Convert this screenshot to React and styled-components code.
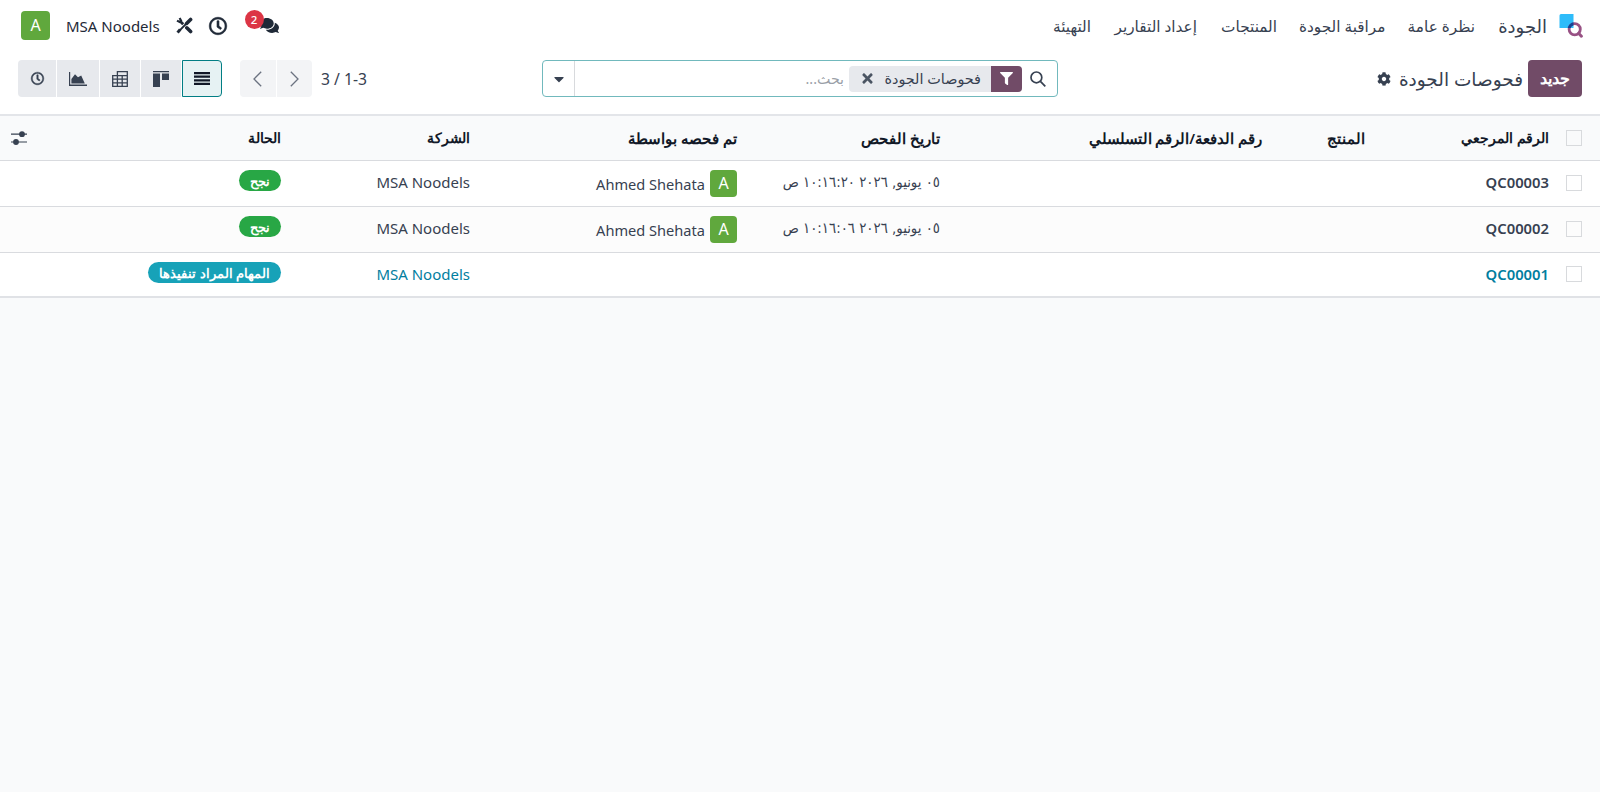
import React from "react";
import styled, { createGlobalStyle } from "styled-components";
import { FaRegClock, FaComments, FaFilter, FaCog, FaCaretDown, FaTimes } from "react-icons/fa";

const menu = [
  { label: "نظرة عامة", width: 64.5 },
  { label: "مراقبة الجودة", width: 83.5 },
  { label: "المنتجات", width: 55 },
  { label: "إعداد التقارير", width: 81 },
  { label: "التهيئة", width: 40 },
];

const columns = [
  { label: "الرقم المرجعي", size: 14.3 },
  { label: "المنتج", size: 14.5 },
  { label: "رقم الدفعة/الرقم التسلسلي", size: 14.6 },
  { label: "تاريخ الفحص", size: 15.3 },
  { label: "تم فحصه بواسطة", size: 15.2 },
  { label: "الشركة", size: 13.8 },
  { label: "الحالة", size: 14 },
];

const checks = [
  {
    ref: "QC00003",
    date: "٠٥ يونيو, ٢٠٢٦ ١٠:١٦:٢٠ ص",
    user: "Ahmed Shehata",
    company: "MSA Noodels",
    state: "نجح",
  },
  {
    ref: "QC00002",
    date: "٠٥ يونيو, ٢٠٢٦ ١٠:١٦:٠٦ ص",
    user: "Ahmed Shehata",
    company: "MSA Noodels",
    state: "نجح",
  },
  {
    ref: "QC00001",
    company: "MSA Noodels",
    state: "المهام المراد تنفيذها",
    todo: true,
  },
];

function Logo() {
  return (
    <svg width="24" height="24" viewBox="0 0 24 24">
      <clipPath id="sheet">
        <path d="M2 0H14.5v14H.5V1.5A1.5 1.5 0 0 1 2 0Z" />
      </clipPath>
      <path d="M2 0H14.5v14H.5V1.5A1.5 1.5 0 0 1 2 0Z" fill="#2ebcfa" />
      <circle cx="15.7" cy="15.3" r="5.6" fill="none" stroke="#985184" strokeWidth="2.8" />
      <circle cx="15.7" cy="15.3" r="5.6" fill="none" stroke="#144496" strokeWidth="2.8" clipPath="url(#sheet)" />
      <path d="M19.8 19.4l2.6 2.8" stroke="#985184" strokeWidth="3" strokeLinecap="round" />
    </svg>
  );
}

function ToolsIcon() {
  return (
    <svg width="17" height="17" viewBox="0 0 17 17" fill="none" stroke="#1f2937">
      <path d="M14.6 2.4L10.6 6.4" strokeWidth="3.6" strokeLinecap="round" />
      <path d="M10 7L3.2 13.8" strokeWidth="1.8" />
      <path d="M4.2 12.4L1.6 15.6" strokeWidth="3" />
      <path d="M1 3.6L3.6 5L5 3.6L3.6 1" strokeWidth="2.2" />
      <path d="M4.2 4.2L7.2 7.2" strokeWidth="2.8" />
      <path d="M10.8 10.8L14.6 14.6" strokeWidth="3.6" strokeLinecap="round" />
    </svg>
  );
}

function AreaIcon() {
  return (
    <svg width="18" height="14" viewBox="0 0 18 14" fill="#374151">
      <path d="M0 0h1.2v12.6H18V14H0z" />
      <path d="M2.4 11.5V7L6 2.2l3 3L12.2 3.4 15.8 11.5z" />
    </svg>
  );
}

function PivotIcon() {
  return (
    <svg width="16" height="16" viewBox="0 0 16 16" fill="none" stroke="#374151" strokeWidth="1.3">
      <path d="M5.4 4.6V.7h9.9v14.6H.7V4.6h14.6M.7 8.2h14.6M.7 11.8h14.6M5.4 4.6v10.7M10.2 4.6v10.7" />
    </svg>
  );
}

function KanbanIcon() {
  return (
    <svg width="16" height="16" viewBox="0 0 16 16" fill="#374151">
      <path d="M0 0h16v1.3H0zM0 2.6h7V16H0zM9 2.6h7V9H9z" />
    </svg>
  );
}

function ListIcon() {
  return (
    <svg width="16" height="13" viewBox="0 0 16 13" fill="#111827">
      <path d="M0 0h16v2.2H0zM0 3.6h16v2.2H0zM0 7.2h16v2.2H0zM0 10.8h16v2.2H0z" />
    </svg>
  );
}

function Chevron({ d }) {
  return (
    <svg width="9" height="16" viewBox="0 0 9 16" fill="none" stroke="#6b7280" strokeWidth="1.3">
      <path d={d} />
    </svg>
  );
}

function SearchIcon() {
  return (
    <svg width="16" height="16" viewBox="0 0 16 16" fill="none" stroke="#374151" strokeWidth="1.7">
      <circle cx="6.4" cy="6.4" r="5.4" />
      <path d="M10.4 10.4L15.3 15.3" />
    </svg>
  );
}

function SlidersIcon() {
  return (
    <svg width="16" height="14" viewBox="0 0 16 14" fill="#374151">
      <path d="M0 2.6h16v1.2H0zM0 10.4h16v1.2H0z" />
      <circle cx="11" cy="3.2" r="2.9" />
      <circle cx="5" cy="11" r="2.9" />
    </svg>
  );
}

function App() {
  return (
    <Page>
      <GlobalStyle />
      <Navbar>
        <Brand>
          <Logo />
          <span>الجودة</span>
        </Brand>
        <Menu>
          {menu.map((item) => (
            <MenuItem key={item.label} $width={item.width}>
              {item.label}
            </MenuItem>
          ))}
        </Menu>
        <Systray>
          <Messages>
            <FaComments size={19} />
            <Counter>2</Counter>
          </Messages>
          <ClockIcon size={18} />
          <ToolsIcon />
          <Company>MSA Noodels</Company>
          <Avatar $size={29}>A</Avatar>
        </Systray>
      </Navbar>

      <ControlPanel>
        <Breadcrumb>
          <NewButton>جديد</NewButton>
          <Title>فحوصات الجودة</Title>
          <FaCog size={14} />
        </Breadcrumb>
        <SearchBar>
          <SearchInput>
            <SearchIcon />
            <Facet>
              <FacetIcon>
                <FaFilter size={13} />
              </FacetIcon>
              <FacetLabel>فحوصات الجودة</FacetLabel>
              <FaTimes size={15} />
            </Facet>
            <Placeholder>بحث...</Placeholder>
          </SearchInput>
          <SearchToggle>
            <FaCaretDown size={16} />
          </SearchToggle>
        </SearchBar>
        <Actions>
          <Pager>3 / 1-3</Pager>
          <PagerButtons>
            <PagerButton $side="right">
              <Chevron d="M.8 .8L8 8L.8 15.2" />
            </PagerButton>
            <PagerButton $side="left">
              <Chevron d="M8.2 .8L1 8L8.2 15.2" />
            </PagerButton>
          </PagerButtons>
          <Views>
            <ViewButton $width={40} $active>
              <ListIcon />
            </ViewButton>
            <ViewButton $width={40}>
              <KanbanIcon />
            </ViewButton>
            <ViewButton $width={40}>
              <PivotIcon />
            </ViewButton>
            <ViewButton $width={42}>
              <AreaIcon />
            </ViewButton>
            <ViewButton $width={38}>
              <ClockIcon size={13} />
            </ViewButton>
          </Views>
        </Actions>
      </ControlPanel>

      <List>
        <HeaderRow>
          <CheckCell>
            <Checkbox />
          </CheckCell>
          {columns.map((column) => (
            <HeaderCell key={column.label} $size={column.size}>
              {column.label}
            </HeaderCell>
          ))}
          <OptionsCell>
            <SlidersIcon />
          </OptionsCell>
        </HeaderRow>
        {checks.map((check, index) => (
          <Row key={check.ref} $todo={check.todo} $striped={index % 2 === 1}>
            <CheckCell>
              <Checkbox />
            </CheckCell>
            <Reference>{check.ref}</Reference>
            <Cell />
            <Cell />
            <DateCell>{check.date}</DateCell>
            <UserCell>
              {check.user ? (
                <>
                  <Avatar $size={27}>A</Avatar>
                  <span>{check.user}</span>
                </>
              ) : (
                ""
              )}
            </UserCell>
            <Cell>{check.company}</Cell>
            <StateCell>
              <Badge $todo={check.todo}>{check.state}</Badge>
            </StateCell>
          </Row>
        ))}
      </List>
    </Page>
  );
}

export default App;

const GlobalStyle = createGlobalStyle`
  * {
    box-sizing: border-box;
  }

  body {
    margin: 0;
    background-color: #f9fafb;
  }
`;

const Page = styled.div`
  min-height: 100vh;
  direction: rtl;
  background-color: #f9fafb;
  color: #374151;
  font-family: "Noto Sans", "DejaVu Sans", sans-serif;
  font-size: 15px;
  line-height: 22px;
  white-space: nowrap;

  svg {
    display: block;
    flex: none;
  }
`;

const ClockIcon = styled(FaRegClock)`
  stroke: currentColor;
  stroke-width: 18px;
  overflow: visible;
`;

const Navbar = styled.div`
  height: 51px;
  padding: 0 17px 0 21px;
  display: flex;
  align-items: center;
  background-color: #fff;
`;

const Brand = styled.div`
  display: flex;
  align-items: center;
  column-gap: 12px;
  font-size: 18px;

  span {
    width: 48px;
  }
`;

const Menu = styled.div`
  display: flex;
  column-gap: 25px;
  margin-right: 24px;
  font-size: 15.3px;
`;

const MenuItem = styled.div`
  width: ${(p) => p.$width}px;
`;

const Systray = styled.div`
  display: flex;
  align-items: center;
  margin-right: auto;
  color: #1f2937;
  column-gap: 16px;
`;

const Messages = styled.div`
  position: relative;
  margin-left: 17px;
`;

const Counter = styled.div`
  position: absolute;
  top: -6px;
  right: 15px;
  width: 19px;
  height: 19px;
  border-radius: 50%;
  background-color: #dc3545;
  color: #fff;
  font-size: 11.5px;
  font-weight: 500;
  line-height: 19px;
  text-align: center;
`;

const Company = styled.div`
  direction: ltr;
`;

const Avatar = styled.div`
  width: ${(p) => p.$size}px;
  height: ${(p) => p.$size}px;
  border-radius: 4px;
  background-color: #60a83d;
  color: #fff;
  font-size: 16px;
  line-height: ${(p) => p.$size}px;
  text-align: center;
`;

const ControlPanel = styled.div`
  height: 65px;
  padding: 9px 18px 0;
  display: grid;
  grid-template-columns: 524px 516px 1fr;
  align-items: start;
  background-color: #fff;
  border-bottom: 2px solid #e3e5e9;
`;

const Breadcrumb = styled.div`
  height: 37px;
  display: flex;
  align-items: center;
`;

const NewButton = styled.div`
  width: 54px;
  height: 37px;
  border-radius: 4px;
  background-color: #714b67;
  color: #fff;
  font-family: "Noto Sans", sans-serif;
  font-size: 15.5px;
  font-weight: 600;
  line-height: 37px;
  text-align: center;
`;

const Title = styled.div`
  margin: 0 5px 0 8px;
  width: 124px;
  font-size: 18.5px;
`;

const SearchBar = styled.div`
  height: 37px;
  display: flex;
  border: 1px solid #71b9bd;
  border-radius: 4px;
`;

const SearchInput = styled.div`
  flex: 1;
  display: flex;
  align-items: center;
  padding-right: 11px;
`;

const Facet = styled.div`
  width: 173px;
  height: 26px;
  margin-right: 8px;
  display: flex;
  align-items: center;
  border-radius: 4px;
  overflow: hidden;
  background-color: #e7e9ed;
  color: #4b5563;
`;

const FacetIcon = styled.div`
  width: 31px;
  height: 26px;
  display: flex;
  align-items: center;
  justify-content: center;
  background-color: #714b67;
  color: #fff;
`;

const FacetLabel = styled.div`
  width: 96px;
  margin: 0 10px;
  font-size: 14.4px;
  color: #374151;
`;

const Placeholder = styled.div`
  margin-right: 5px;
  font-size: 14.2px;
  color: #9a9fa8;
`;

const SearchToggle = styled.div`
  width: 32px;
  display: flex;
  align-items: center;
  justify-content: center;
  border-right: 1px solid #d8dadd;
`;

const Actions = styled.div`
  display: flex;
  align-items: center;
  justify-content: flex-end;
`;

const Pager = styled.div`
  direction: ltr;
  margin-left: 9px;
  font-size: 15.7px;
`;

const PagerButtons = styled.div`
  display: flex;
  column-gap: 1px;
  margin-left: 18px;
`;

const PagerButton = styled.div`
  width: 35.5px;
  height: 37px;
  display: flex;
  align-items: center;
  justify-content: center;
  background-color: #f3f4f6;
  border-radius: ${(p) => (p.$side === "right" ? "0 4px 4px 0" : "4px 0 0 4px")};
`;

const Views = styled.div`
  display: flex;
  column-gap: 1px;
`;

const ViewButton = styled.div`
  width: ${(p) => p.$width}px;
  height: 37px;
  display: flex;
  align-items: center;
  justify-content: center;
  background-color: ${(p) => (p.$active ? "#e6f2f3" : "#e7e9ed")};
  border: ${(p) => (p.$active ? "1px solid #017e84" : "none")};

  &:first-child {
    border-radius: 0 4px 4px 0;
  }

  &:last-child {
    border-radius: 4px 0 0 4px;
  }
`;

const List = styled.div`
  border-bottom: 2px solid #e0e2e6;
`;

const CheckCell = styled.div`
  height: 44px;
  padding-right: 18px;
  display: flex;
  align-items: center;
`;

const Row = styled.div`
  height: 46px;
  display: grid;
  grid-template-columns: 51px 184px 103px 322px 203px 267px 189px 1fr 27px;
  background-color: ${(p) => (p.$striped ? "#fcfcfc" : "#fff")};
  color: ${(p) => (p.$todo ? "#017e9f" : "#374151")};
  border-bottom: 1px solid #d9dbdf;

  &:last-child {
    height: 43px;
    border-bottom: none;

    ${CheckCell} {
      height: 42px;
    }
  }
`;

const HeaderRow = styled(Row)`
  height: 45px;
  align-items: center;
  background-color: #f9fafb;
  color: #111827;
`;

const HeaderCell = styled.div`
  font-family: "Noto Sans", sans-serif;
  font-size: ${(p) => p.$size}px;
  font-weight: 600;
`;

const OptionsCell = styled.div`
  display: flex;
`;

const Checkbox = styled.div`
  width: 16px;
  height: 16px;
  border: 1px solid #d8dadd;
`;

const Cell = styled.div`
  padding-top: 10px;
`;

const Reference = styled(Cell)`
  font-weight: 600;
  font-size: 14.8px;
`;

const DateCell = styled(Cell)`
  font-family: "DejaVu Sans Condensed", "DejaVu Sans", sans-serif;
  font-size: 14.8px;
`;

const UserCell = styled.div`
  padding-top: 9px;
  display: flex;
  align-items: flex-start;
  column-gap: 5px;
  font-size: 14.6px;

  span {
    padding-top: 3px;
  }
`;

const StateCell = styled.div`
  padding-top: 9px;
`;

const Badge = styled.div`
  width: max-content;
  height: 21px;
  padding: 0 11px;
  border-radius: 11px;
  background-color: ${(p) => (p.$todo ? "#17a2b8" : "#28a745")};
  color: #fff;
  font-family: "Noto Sans", sans-serif;
  font-size: 12.8px;
  font-weight: 700;
  line-height: 23px;
`;
